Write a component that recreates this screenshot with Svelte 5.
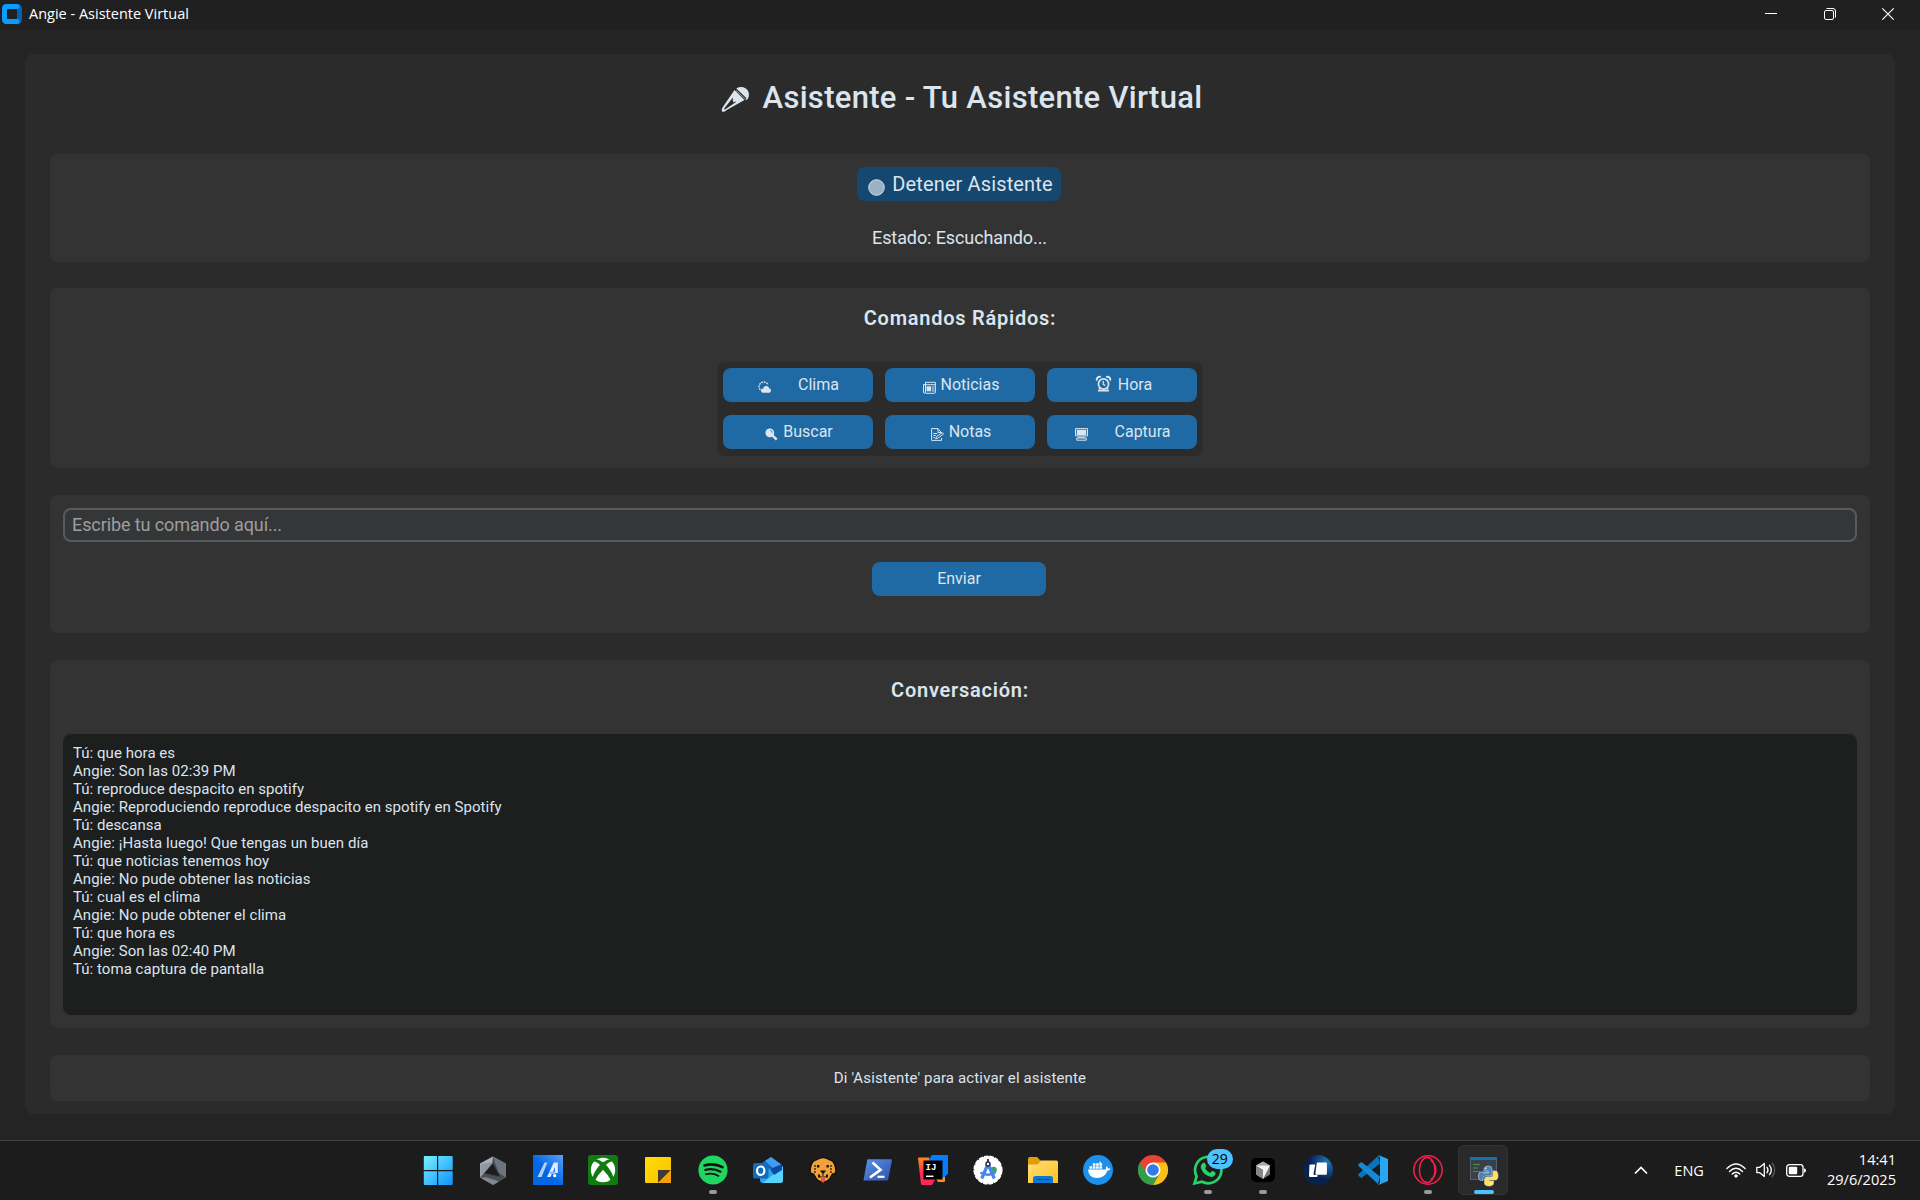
<script>
  const commands = [
    { icon: 'weather', label: 'Clima' },
    { icon: 'news', label: 'Noticias' },
    { icon: 'clock', label: 'Hora' },
    { icon: 'search', label: 'Buscar' },
    { icon: 'notes', label: 'Notas' },
    { icon: 'screen', label: 'Captura' },
  ];

  const chat = [
    ['Tú', 'que hora es'],
    ['Angie', 'Son las 02:39 PM'],
    ['Tú', 'reproduce despacito en spotify'],
    ['Angie', 'Reproduciendo reproduce despacito en spotify en Spotify'],
    ['Tú', 'descansa'],
    ['Angie', '¡Hasta luego! Que tengas un buen día'],
    ['Tú', 'que noticias tenemos hoy'],
    ['Angie', 'No pude obtener las noticias'],
    ['Tú', 'cual es el clima'],
    ['Angie', 'No pude obtener el clima'],
    ['Tú', 'que hora es'],
    ['Angie', 'Son las 02:40 PM'],
    ['Tú', 'toma captura de pantalla'],
  ];

  const apps = [
    { id: 'start' }, { id: 'armoury' }, { id: 'asus' }, { id: 'xbox' }, { id: 'sticky' },
    { id: 'spotify', open: true }, { id: 'outlook' }, { id: 'dog' }, { id: 'powershell' },
    { id: 'intellij' }, { id: 'android' }, { id: 'explorer' }, { id: 'docker' }, { id: 'chrome' },
    { id: 'whatsapp', open: true, badge: '29' }, { id: 'cursor', open: true }, { id: 'cards' },
    { id: 'vscode' }, { id: 'opera', open: true }, { id: 'python', active: true },
  ];
</script>

<div class="desktop">
  <header class="titlebar">
    <svg class="logo" width="20" height="20" viewBox="0 0 20 20">
      <rect width="20" height="20" rx="4.5" fill="#0560b0" />
      <path d="M4.5 0H15a2.3 2.3 0 0 1 0 5H5v10h10a2.3 2.3 0 0 1 0 5H4.5A4.5 4.5 0 0 1 0 15.500V4.500A4.500 4.500 0 0 1 4.500 0Z" fill="#0a9dff" />
      <rect x="5" y="5" width="10" height="10" rx="1" fill="#202020" />
    </svg>
    <span class="caption">Angie - Asistente Virtual</span>
    <div class="controls">
      <svg width="12" height="12" viewBox="0 0 12 12"><path d="M0 5.500H12" stroke="#fff" /></svg>
      <svg width="12" height="12" viewBox="0 0 12 12" fill="none" stroke="#fff"><rect x=".5" y="2.500" width="9" height="9" rx="1.500" /><path d="M2.500 .5H9A2.500 2.500 0 0 1 11.500 3V9.500" /></svg>
      <svg width="12" height="12" viewBox="0 0 12 12"><path d="M.3.3 11.700 11.700M11.700.3.3 11.700" stroke="#fff" stroke-width="1.150" /></svg>
    </div>
  </header>

  <main class="window">
    <h1>
      <svg width="29" height="28" viewBox="0 0 29 28">
        <path d="M13.500 4 2.200 20.500c-2.400 3.400-1.600 5.800.7 5.300 1-.2 2.200-1.200 3.300-2L23.500 14Z" fill="#dce4ee" />
        <path d="M11.500 12 3.800 21.800c-1 1.500-.8 2.200.2 1.600L15 16Z" fill="#2b2b2b" />
        <path d="m11.500 13.500 3.300-1.300.5 2.800-2.800 1.500Z" fill="#dce4ee" />
        <path d="M15 3c1.500-2.300 6-2.900 9.500-.7C28 4.500 29 9 26.800 13c-.7 1-1.500 1-2.300.4L15.200 5Z" fill="#dce4ee" />
        <path d="m14.600 2.800 10.500 10" stroke="#2b2b2b" stroke-width="1.200" />
      </svg>
      <span>Asistente - Tu Asistente Virtual</span>
    </h1>

    <section class="panel status">
      <button class="stop">
        <svg width="17" height="17" viewBox="0 0 17 17">
          <defs>
            <pattern id="hatch" width="1.414" height="1.414" patternUnits="userSpaceOnUse" patternTransform="rotate(-45)">
              <rect width=".95" height="1.414" fill="#dce4ee" />
            </pattern>
          </defs>
          <circle cx="8.500" cy="8.500" r="7.800" fill="url(#hatch)" stroke="#dce4ee" stroke-width=".9" />
        </svg>
        <span>Detener Asistente</span>
      </button>
      <p>Estado: Escuchando...</p>
    </section>

    <section class="panel quick">
      <h2>Comandos Rápidos:</h2>
      <div class="grid">
        {#each commands as c}
          <button class="cmd {c.icon}">
            {#if c.icon === 'clock'}
              <svg width="15" height="16" viewBox="0 0 15 16" fill="none" stroke="#dce4ee">
                <circle cx="7.500" cy="8" r="5.100" stroke-width="1.700" />
                <path d="M7.300 5v3.300l2 1.200" stroke-width="1.200" />
                <path d="M1 4.500a2.600 2.600 0 0 1 3.800-3.300M14 4.500a2.600 2.600 0 0 0-3.800-3.300" stroke-width="2" />
                <path d="M2 14.600h11M3 13l1-1M12 13l-1-1" stroke-width="1.900" />
              </svg>
            {:else}
              <svg width="13" height="13" viewBox="0 0 13 13" fill="none" stroke="#dce4ee">
                {#if c.icon === 'weather'}
                  <path d="M2.300 8.700A4.600 4.600 0 1 1 10 4" stroke-dasharray="1.800 .8" stroke-width="1.300" />
                  <g fill="#dce4ee" stroke="none"><circle cx="5" cy="9.600" r="2.100" /><circle cx="8.200" cy="8" r="2.900" /><circle cx="10.800" cy="9.500" r="2.200" /><rect x="4.800" y="8.200" width="6.200" height="3.500" /></g>
                {:else if c.icon === 'news'}
                  <path d="M2.500 12.300h8.700a1.200 1.200 0 0 0 1.200-1.200V1.300H2.500v9.800a1 1 0 0 1-2 0V3.500h2" />
                  <path d="M2.500 3.700h10M9 6h2.500M9 8h2.500M9 10h2.500" />
                  <rect x="3.500" y="5.300" width="4.700" height="5" fill="#dce4ee" stroke="none" />
                {:else if c.icon === 'search'}
                  <path d="m7.700 7.700 4 4" stroke-width="2.500" />
                  <circle cx="4.800" cy="4.800" r="4.400" fill="#dce4ee" stroke="none" />
                  <path d="M5.300 2.400a2.400 2.400 0 0 1 1.900 2.300" stroke="#1f6aa5" stroke-width=".9" />
                {:else if c.icon === 'notes'}
                  <path d="M10.500 4.800 7 .6H.6v11.800h9.900V10M7 .8v3.700h3.500M2.300 5.500h4M2.300 7.500h2.500M2.300 9.500h1.500" />
                  <path d="m4.600 10.900 1-2.500 5.700-3.800 1.200 1.500-5.600 4Z" />
                {:else}
                  <path d="M.5.600h12v7.300H.5Z" />
                  <rect x="1.800" y="1.800" width="9.400" height="5.200" fill="#dce4ee" stroke="none" />
                  <path d="M3 9.200h7M1.800 12.200V10h9.400v2.200Z" />
                {/if}
              </svg>
            {/if}
            <span>{c.label}</span>
          </button>
        {/each}
      </div>
    </section>

    <section class="panel entry">
      <input placeholder="Escribe tu comando aquí..." />
      <button class="send">Enviar</button>
    </section>

    <section class="panel talk">
      <h2>Conversación:</h2>
      <div class="log">
        {#each chat as [who, text]}
          <p>{who}: {text}</p>
        {/each}
      </div>
    </section>

    <footer class="panel hint">Di 'Asistente' para activar el asistente</footer>
  </main>

  <nav class="taskbar">
    <div class="apps">
      {#each apps as app}
        <div class="app" class:open={app.open} class:active={app.active}>
          <svg width="30" height="30" viewBox="0 0 30 30">
            {#if app.id === 'start'}
              <defs><linearGradient id="win" x1="0" y1="0" x2="30" y2="30" gradientUnits="userSpaceOnUse"><stop stop-color="#7df3ff" /><stop offset="1" stop-color="#0a93fb" /></linearGradient></defs>
              <path d="M1.800 1H14v14H.8V2Q.8 1 1.800 1ZM15.200 1h13.500q1 0 1 1v13H15.200ZM.8 16.200H14V30H1.800q-1 0-1-1ZM15.200 16.200h14.500V29q0 1-1 1H15.200Z" fill="url(#win)" />
            {:else if app.id === 'armoury'}
              <path d="m15 1.500 13 7v14l-13 7.500-13-7.500v-14Z" fill="#4c5057" />
              <path d="m15 1.500-13 7v14l12-13Z" fill="#a9b1bb" />
              <path d="m15 1.500 13 7v14l-7.500-5Z" fill="#6d747d" />
              <path d="m2 22.500 13 7.500 6-3.500-12-4Z" fill="#83888f" />
              <path d="m15 8 7.500 14L6 18.500Z" fill="#1c1c1f" stroke="#3f444b" />
              <path d="m2.500 9-.2 13L7 17l7.500-10Z" fill="#88909b" opacity=".75" />
            {:else if app.id === 'asus'}
              <defs><linearGradient id="asus" x1="0" y1="1" x2="1" y2="0"><stop offset=".45" stop-color="#0367e5" /><stop offset="1" stop-color="#5b9ffb" /></linearGradient></defs>
              <rect width="30" height="30" fill="url(#asus)" />
              <path d="M11.500 7.500h3L8.500 22h-4Z" fill="#b5d1fa" />
              <path d="M14 22 20.800 7.500h4V18h-2.800v-6L17.500 22Z" fill="#e2edfd" />
              <path d="M17.500 16.500h5V19h-6Z" fill="#8bb9f7" /><circle cx="21.700" cy="20.700" r="1.600" fill="#fff" />
            {:else if app.id === 'xbox'}
              <rect width="30" height="30" rx="3" fill="#107c10" />
              <circle cx="15" cy="15" r="12.200" fill="#fff" />
              <path d="M7.200 4.200Q10.500 4 15 7.300 19.500 4 22.800 4.200l1 2.200Q21 6.800 18 9.800q6.500 7.300 7.800 14.200l-2.500 2Q20 19.500 15 14.700 10 19.500 6.700 26l-2.500-2Q5.500 17.100 12 9.800 9 6.800 6.200 6.400Z" fill="#107c10" />
            {:else if app.id === 'sticky'}
              <defs><linearGradient id="note" x1="0" y1="0" x2="1" y2="1"><stop stop-color="#ffe000" /><stop offset="1" stop-color="#fbbd05" /></linearGradient></defs>
              <path d="M3 2h24q1 0 1 1v25H3q-1 0-1-1V3q0-1 1-1Z" fill="url(#note)" />
              <path d="M15 15h13L15 28Z" fill="#3b3a39" /><path d="M28 15v12q0 1-1 1H15Z" fill="#f5a10a" />
            {:else if app.id === 'spotify'}
              <circle cx="15" cy="15" r="14.600" fill="#1fd660" />
              <g fill="none" stroke="#121212" stroke-linecap="round"><path d="M6.500 10.400q9.500-2.600 18 1.700" stroke-width="2.600" /><path d="M7.200 15q8-2.200 15.300 1.700" stroke-width="2.200" /><path d="M8 19.200q6.800-1.700 12.500 1.700" stroke-width="1.800" /></g>
            {:else if app.id === 'outlook'}
              <path d="M7 9 18 2l10.500 7.500V14H7Z" fill="#1263bd" /><path d="m12 6 6-4 11 8-7 5Z" fill="#3f9cf0" />
              <path d="M30 12v13q0 3-3 3H10q-3 0-3-3V15Z" fill="#2aa5ee" /><path d="M30 11 10 28h17q3 0 3-3Z" fill="#58d4fb" /><path d="m17 14 12-5v6l-8 5Z" fill="#0d4aa5" />
              <rect x="0" y="8" width="15.500" height="15.500" rx="1.800" fill="#0f6cbd" /><ellipse cx="7.700" cy="15.700" rx="3.700" ry="4.200" fill="none" stroke="#fff" stroke-width="2.200" />
            {:else if app.id === 'dog'}
              <path d="M9 4.500Q15 .5 21 4.500q5 .5 6.500 8 1.500 7-3 6.500L21.500 24q-2 3-6.500 3t-6.500-3L5.500 19Q1 19.500 2.500 12.500q1.500-7.500 6.500-8Z" fill="#f0a23c" stroke="#17110b" stroke-width="1.400" />
              <path d="M7 10v8M23 10v8" stroke="#17110b" stroke-width="1.200" stroke-dasharray="2 1" /><rect x="9" y="10" width="2.300" height="2.500" fill="#17110b" /><rect x="18.500" y="10" width="2.300" height="2.500" fill="#17110b" />
              <path d="M12 15.500h6l-2 2.800h-2ZM14.500 17h1v4h-1ZM10 19.500h2v2h6v-2h2v3H10Z" fill="#17110b" /><path d="M13 22h4v4l-2 2-2-2Z" fill="#ee5145" />
            {:else if app.id === 'powershell'}
              <defs><linearGradient id="ps" x1="0" y1="0" x2="1" y2="1"><stop stop-color="#5a93ee" /><stop offset="1" stop-color="#2e4fa3" /></linearGradient></defs>
              <path d="M5.200 4.200H28q1.200 0 .9 1.200l-3.700 19q-.3 1.200-1.500 1.200H1.500q-1.200 0-.9-1.200l3.500-19q.2-1.200 1.100-1.200Z" fill="url(#ps)" />
              <path d="m9.500 7.500 8 7.300L7 22.500" fill="none" stroke="#fff" stroke-width="2.600" /><path d="M14.500 21.800h7" stroke="#fff" stroke-width="2.200" />
            {:else if app.id === 'intellij'}
              <defs><linearGradient id="ij" x1="0" y1="0" x2="0" y2="1"><stop stop-color="#ff8a1c" /><stop offset=".6" stop-color="#fe2857" /></linearGradient></defs>
              <path d="M0 3.500Q0 2.500 1 2.500h10l6 22L14 30H4.500Q3.200 30 3 29Z" fill="url(#ij)" />
              <path d="M13 1q.6-1 1.500-1H29q1 0 1 1v17.500L24 25 10 8Z" fill="#087cfa" /><path d="M17 22h10v4q0 1-1 1h-6Z" fill="#fd8c1c" />
              <rect x="5.500" y="5.500" width="19" height="19" fill="#000" /><text x="7.500" y="14.600" class="ij">IJ</text><path d="M8 21.300h7.500" stroke="#fff" stroke-width="1.500" />
            {:else if app.id === 'android'}
              <circle cx="15" cy="15" r="13.800" fill="#fff" stroke="#fff" stroke-width="1.600" stroke-dasharray="4.500 1" />
              <circle cx="20.500" cy="15" r="3.300" fill="#37a853" />
              <path d="m15 9-6.300 14.500M15 9l6.300 14.500" stroke="#4285f4" stroke-width="3.200" /><path d="M7.500 17.500q7.500 4.500 15 0" fill="none" stroke="#4285f4" stroke-width="2.600" />
              <path d="M15 4v3" stroke="#26303b" stroke-width="1.800" /><circle cx="15" cy="9" r="2" fill="#fff" stroke="#26303b" stroke-width="1.500" />
            {:else if app.id === 'explorer'}
              <defs><linearGradient id="fold" x1="0" y1="0" x2="1" y2="1"><stop stop-color="#ffe07a" /><stop offset="1" stop-color="#fdbf1c" /></linearGradient></defs>
              <path d="M0 4q0-2 2-2h7l4 4h8v6H0Z" fill="#dfa007" /><path d="M0 9.500h9.500L13 5.500h15.500Q30 5.500 30 7v21H0Z" fill="url(#fold)" />
              <path d="M5 28v-4.500Q5 21 7.500 21h15q2.500 0 2.500 2.500V28Z" fill="#0b78d4" /><path d="M9 24.500h12" stroke="#0a4b8f" stroke-width="1.200" stroke-linecap="round" />
            {:else if app.id === 'docker'}
              <circle cx="15" cy="15" r="15" fill="#1d90ee" />
              <path d="M5 14.500h18q-.5-2 .5-3.500 1.500 1 1.800 2.500 1.400-.3 2.200.2-.7 1.800-3 1.900-2.500 7.400-10.500 7.400-8.500 0-9-8.500Z" fill="#fff" />
              <path d="M6.500 11.200h2.700v2.500H6.500ZM9.800 11.200h2.700v2.500H9.800ZM13.100 11.200h2.700v2.500h-2.700ZM16.400 11.200h2.700v2.500h-2.700ZM9.800 8.300h2.700v2.400H9.800ZM13.100 8.300h2.700v2.400h-2.700ZM16.400 8.300h2.700v2.400h-2.700ZM16.400 6.700h1.500v1.500h-1.500Z" fill="#fff" />
            {:else if app.id === 'chrome'}
              <circle cx="15" cy="15" r="15" fill="#ea4335" />
              <path d="M28 7.500A15 15 0 0 1 15 30l6.500-11.200L21.500 11 15 7.500Z" fill="#fbc116" />
              <path d="M2 7.500A15 15 0 0 0 15 30l6.500-11.200L15 22.500l-6.500-3.700Z" fill="#2ea04c" />
              <circle cx="15" cy="15" r="7.500" fill="#fff" /><circle cx="15" cy="15" r="5.800" fill="#3479ea" />
            {:else if app.id === 'whatsapp'}
              <path d="M1.500 28.500 3.600 21.300A13.200 13.200 0 1 1 9 26.700Z" fill="none" stroke="#25d366" stroke-width="2.700" />
              <path d="M10 8q1-.8 1.800 0l1.500 3q.2.800-1.200 2.300 1.700 3.300 5 4.700l1.700-1.800q.7-.5 3.200 1.100 1 .6.500 2-1.200 2.700-4 2.600-7.500-.8-10.500-8.400Q7 10 10 8Z" fill="#25d366" />
            {:else if app.id === 'cursor'}
              <rect x="3" y="3" width="24" height="24" rx="5" fill="#000" />
              <path d="m15 6.500 7 4v9l-7 4.500-7-4.500v-9Z" fill="#777" /><path d="m15 6.500 7 4H8Z" fill="#aaa" /><path d="M8 10.500h14L15 24v-9Z" fill="#f3f3f3" /><path d="m8 10.500 7 4.500v9l-7-4.500Z" fill="#868686" />
            {:else if app.id === 'cards'}
              <defs><radialGradient id="orb" cx=".8" cy=".25" r=".9"><stop stop-color="#2377b4" /><stop offset=".65" stop-color="#071f50" /><stop offset="1" stop-color="#0a2449" /></radialGradient></defs>
              <circle cx="15" cy="15" r="15" fill="url(#orb)" />
              <path d="M7.200 9.500h5L10.500 19q0 1 1 1h3v1.200q0 .8-1 .8H7q-1.200 0-1-1.200l.4-10.300q0-1 .8-1Z" fill="#fff" /><path d="M14.500 7.500h8.200q1.200 0 1.200 1.200v10q0 1-1 1h-9.700q-1 0-.8-1l1.300-10.200q.1-1 .8-1Z" fill="#fff" />
            {:else if app.id === 'vscode'}
              <path d="M22 8.500 3.500 23 .3 20.800v-1.600L20 1Z" fill="#0b72bd" /><path d="M22 21.500 3.500 7 .3 9.200v1.600L20 29Z" fill="#1688d6" />
              <path d="M21 .2 30 4v22l-9 3.800-1.500-1.200q2.500 1 2.500-1.500V3q0-2.500-2.500-1.500Z" fill="#27a7f2" />
            {:else if app.id === 'opera'}
              <g fill="none" stroke="#fa1e4e"><circle cx="15" cy="15" r="14.200" stroke-width="1.500" /><ellipse cx="15" cy="15" rx="7.800" ry="12.500" stroke-width="1.500" transform="translate(-.8 0)" /><path d="M17.500 5.500q5.500 3 5.500 9.500t-5.500 9.500" stroke-width="1.300" /></g>
            {:else if app.id === 'python'}
              <rect x="2.500" y="1.500" width="26" height="22" fill="#3a4048" stroke="#55606c" /><rect x="2" y="1" width="27" height="3" fill="#1570ae" />
              <path d="M5 8.500h7M5 12h5M5 15.500h7" stroke="#3d9440" stroke-width="1.200" />
              <path d="M15.500 17h5v-1h-7.500q-2.500 0-2.500 4 0 4.500 3 4.500h1.500v-2q0-2.500 2.500-2.500h4.500q2 0 2-2.200v-4.500Q24 10 20.500 10t-4.500 2.500v2.300h4.500" fill="#4385bb" stroke="#d7dde2" stroke-width=".6" />
              <path d="M25 15h2.300q2.700 0 2.700 4.800 0 4.200-2.700 4.200H21v1h4.500v2q0 3-4.500 3t-4.500-3v-3.500q0-2.500 2.500-2.500h3.700q2.300 0 2.300-2.500Z" fill="#ffe15c" stroke="#d7dde2" stroke-width=".6" />
              <circle cx="17.800" cy="12.300" r=".8" fill="#fff" /><circle cx="23" cy="27.500" r=".8" fill="#fff" />
            {/if}
          </svg>
          {#if app.badge}<span class="badge">{app.badge}</span>{/if}
        </div>
      {/each}
    </div>

    <div class="tray">
      <svg class="chevron" width="14" height="9" viewBox="0 0 14 9"><path d="m1 7.500 6-6 6 6" fill="none" stroke="#fff" stroke-width="1.700" /></svg>
      <span class="lang">ENG</span>
      <svg width="20" height="15" viewBox="0 0 20 15" fill="none" stroke="#fff" stroke-width="1.400" stroke-linecap="round">
        <path d="M.9 5.600Q10-3.400 19.100 5.600M3.500 8.400q6.500-6.300 13 0M6.200 11q3.800-3.600 7.600 0" /><circle cx="10" cy="13" r="1.300" fill="#fff" stroke-width=".8" />
      </svg>
      <svg class="sound" width="20" height="18" viewBox="0 0 20 18" fill="none" stroke="#fff" stroke-width="1.300" stroke-linecap="round" stroke-linejoin="round">
        <path d="M.8 6.300h3L8.300 2.500v13L3.800 11.700h-3ZM11 6.300q2 2.700 0 5.400M13.500 4.300q3.600 4.700 0 9.400" /><path d="M16.200 2.200q5 6.800 0 13.600" stroke="#5a5a5a" />
      </svg>
      <svg class="battery" width="20" height="13" viewBox="0 0 20 13"><rect x=".7" y=".7" width="16.300" height="11.600" rx="2.600" fill="none" stroke="#fff" stroke-width="1.300" /><rect x="2.800" y="2.800" width="8.400" height="7.400" rx="1" fill="#fff" /><path d="M18 4.200q2 .3 2 2.300t-2 2.300Z" fill="#fff" /></svg>
      <div class="time"><span>14:41</span><span>29/6/2025</span></div>
    </div>
  </nav>
</div>

<style>
  :global(body) { background: #242424; }
  .desktop, .desktop * { box-sizing: border-box; }
  .desktop {
    width: 1920px; height: 1200px; display: flex; flex-direction: column;
    background: #242424; color: #dce4ee; font-family: Roboto, sans-serif; overflow: hidden;
  }
  h1, h2, p { margin: 0; font-weight: 500; }
  button { border: 0; padding: 0; color: inherit; font-family: inherit; display: flex; align-items: center; justify-content: center; }
  svg { display: block; flex: none; overflow: visible; }

  .titlebar { height: 29px; flex: none; display: flex; align-items: center; background: #202020; padding: 0 26px 1px 2px; color: #fff; }
  .logo { margin-right: 7px; }
  .caption { font: 14.500px/24px "Open Sans", sans-serif; }
  .controls { margin-left: auto; display: flex; gap: 46.500px; }

  .window { margin: 25px 25px 0; height: 1060px; flex: none; border-radius: 8px; background: #2b2b2b; padding: 0 25px; display: flex; flex-direction: column; }
  h1 { height: 100px; flex: none; display: flex; justify-content: center; padding: 24px 0 0 3px; gap: 13px; font-size: 31px; line-height: 39px; letter-spacing: .3px; }
  h1 svg { margin-top: 8px; }
  .panel { background: #333; border-radius: 8px; flex: none; display: flex; flex-direction: column; align-items: center; }

  .status { height: 108px; padding-top: 13px; }
  .stop { width: 204px; height: 34px; margin-right: 2px; border-radius: 8px; background: #144870; font-size: 20px; letter-spacing: .13px; gap: 7px; padding-left: 3px; }
  .stop svg { margin-top: 7px; }
  .status p { margin-top: 23px; padding-right: 1px; font-size: 18px; line-height: 28px; font-weight: 400; letter-spacing: -.1px; }

  .quick { height: 180px; margin-top: 26px; padding-top: 16px; }
  h2 { font-size: 20px; line-height: 28px; font-weight: 600; letter-spacing: .75px; }
  .grid { margin-top: 30px; display: grid; grid-template-columns: repeat(3, 150px); gap: 13px 12px; padding: 6px 6px 7px; border-radius: 8px; background: #2b2b2b; }
  .cmd, .send { height: 34px; border-radius: 8px; background: #1f6aa5; font-size: 16px; padding-bottom: 1px; }
  .cmd { gap: 5px; padding-left: 2px; }
  .cmd svg { margin-top: 5px; }
  .clock { gap: 7px; padding-left: 4px; }
  .clock svg { margin-top: -1px; }
  .weather, .screen { gap: 27px; padding-left: 1px; }

  .entry { height: 138px; margin-top: 27px; padding: 13px; }
  input {
    width: 100%; height: 34px; border: 2px solid #565b5e; border-radius: 8px; background: #343638; color: #dce4ee;
    padding: 0 7px 1px; font: 18px Roboto, sans-serif; letter-spacing: -.1px; outline: none;
  }
  input::placeholder { color: #9e9e9e; opacity: 1; }
  .send { width: 174px; margin: 20px 2px 0 0; }

  .talk { height: 368px; margin-top: 27px; padding: 16px 13px 13px; }
  .log { width: 100%; height: 282px; margin-top: 30px; border-radius: 8px; background: #1d1e1e; padding: 10px; }
  .log p { font-size: 15px; line-height: 18px; font-weight: 400; letter-spacing: .04px; }

  .hint { height: 46px; margin-top: 27px; justify-content: center; font-size: 15px; line-height: 18px; letter-spacing: .14px; }

  .taskbar { margin-top: auto; height: 60px; flex: none; border-top: 1px solid #424242; background: #1c1c1c; display: flex; padding-left: 410px; color: #fff; }
  .apps { display: flex; }
  .app { width: 55.060px; position: relative; display: flex; justify-content: center; padding-top: 14px; }
  .app.active { width: 50px; height: 50px; margin: 4px 2.500px 0; padding-top: 10px; border-radius: 5px; background: #2a2a2a; border: 1px solid #323232; }
  .app.open::after, .app.active::after { content: ""; position: absolute; top: 49px; left: 23.500px; width: 8px; height: 4px; border-radius: 2px; background: #9a9a9a; }
  .app.active::after { top: 44px; left: 14.500px; width: 20px; background: #4cc2ff; }
  .badge { position: absolute; top: 8px; left: 26px; width: 26px; height: 20px; border-radius: 10px; background: #4cc2ff; color: #000; font: 14px/20px "Open Sans", sans-serif; text-align: center; }
  .ij { font: bold 9px "Liberation Mono", monospace; fill: #fff; }

  .tray { margin-left: auto; padding: 0 24px 1px 0; display: flex; align-items: center; font: 15px/20px "Open Sans", sans-serif; }
  .lang { margin: 1px 22px 0 26px; font-size: 14.500px; }
  .sound { margin-left: 10px; }
  .battery { margin: 0 21px 0 10px; }
  .time { display: flex; flex-direction: column; align-items: flex-end; font-size: 14.600px; padding-bottom: 2px; }
</style>
